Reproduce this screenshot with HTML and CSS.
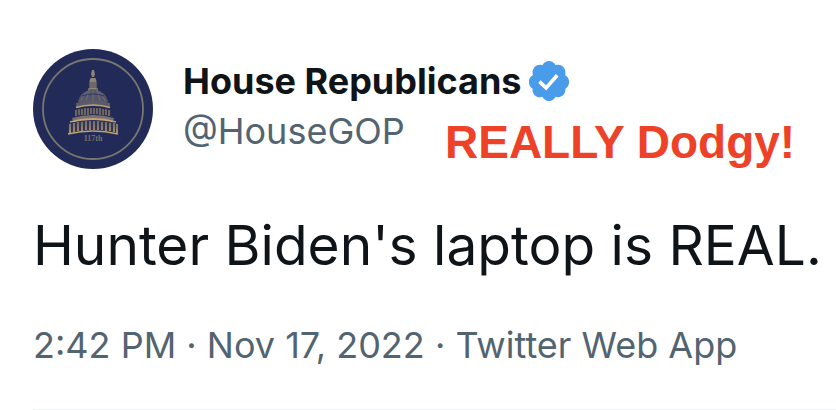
FILE: index.html
```
<!DOCTYPE html>
<html lang="en">
<head>
    <meta charset="UTF-8">
    <meta name="viewport" content="width=device-width, initial-scale=1">
    <title>House Republicans</title>
    <link rel="stylesheet" href="styles.css">
</head>
<body>
    <article class="tweet">
        <header class="tweet-header">
            <svg class="avatar" viewBox="0 0 120 120" role="img" aria-label="Capitol dome">
                <defs>
                    <linearGradient id="gold" x1="0" y1="0" x2="0" y2="1">
                        <stop offset="0" stop-color="#77727a"/>
                        <stop offset="1" stop-color="#b99a68"/>
                    </linearGradient>
                </defs>
                <circle cx="60" cy="60" r="60" fill="#222b57"/>
                <circle cx="60" cy="60" r="50" fill="none" stroke="#77766f" stroke-width="1.8"/>
                <!-- lantern and statue -->
                <path d="M59 28l-1-3 1-4h2l1 4-1 3zM57.5 29h5l1 3v8h-7v-8z" fill="#8d8378"/>
                <path d="M58 33v6M60 33v6M62 33v6" stroke="#34364f" stroke-width=".7"/>
                <path d="M55 40h10" stroke="#9a8b74" stroke-width="1.2"/>
                <!-- dome -->
                <path d="M45 53C46 46 52 41 60 40.500c8 .5 14 5.500 15 12.500z" fill="#555669"/>
                <path d="M48 52q2-7 8-11M53 52q1-7 4-11M60 52V41M67 52q-1-7-4-11M72 52q-2-7-8-11" fill="none" stroke="#77747a" stroke-width=".8"/>
                <path d="M49 47q11-4 22 0" fill="none" stroke="#30375a" stroke-width="1"/>
                <path d="M43 54q17-5 34 0v5q-17-4-34 0z" fill="#5c5b68"/>
                <path d="M43 58.500q17-5 34 0" fill="none" stroke="#c0a273" stroke-width="1.600"/>
                <!-- upper colonnade -->
                <path d="M42 61q18-4 36 0v7q-18-4-36 0z" fill="#313552"/>
                <path d="M43 61v6M46 60v6M49 60v6M52 59v7M55 59v7M58 59v6M61 59v6M64 59v6M67 59v7M70 60v6M73 60v6M76 61v6" stroke="#92866f" stroke-width="1.200"/>
                <path d="M39 69q21-6 42 0l-1 3q-20-5-40 0z" fill="#777074"/>
                <path d="M37 73q23-6 46 0" fill="none" stroke="#c5a471" stroke-width="1.800"/>
                <!-- lower colonnade -->
                <path d="M36 74q24-5 48 0l1 10q-25-6-50 0z" fill="#343753"/>
                <path d="M37 75v9M41 74v9M45 73v9M49 73v9M53 72v9M57 72v9M61 72v9M65 72v9M69 73v8M73 73v9M77 74v8M81 74v9M84 75v9" stroke="url(#gold)" stroke-width="1.700"/>
                <path d="M35 85q25-6 50 0" fill="none" stroke="#bda17a" stroke-width="1.500"/>
                <text class="seal-text" x="60" y="92" text-anchor="middle">117th</text>
            </svg>
            <div class="author">
                <div class="name-row">
                    <span class="name">House Republicans</span>
                    <svg class="badge" viewBox="0 0 24 24" role="img" aria-label="Verified account">
                        <path fill="#489ce9" d="M22.500 12.500c0-1.580-.875-2.950-2.148-3.600.154-.435.238-.905.238-1.400 0-2.210-1.710-3.998-3.818-3.998-.47 0-.92.084-1.336.25C14.818 2.415 13.510 1.500 12 1.500s-2.816.917-3.437 2.250c-.415-.165-.866-.25-1.336-.25-2.110 0-3.818 1.790-3.818 4 0 .494.083.964.237 1.400-1.272.65-2.147 2.018-2.147 3.600 0 1.495.782 2.798 1.942 3.486-.02.170-.032.340-.032.514 0 2.210 1.708 4 3.818 4 .47 0 .92-.086 1.335-.25.620 1.334 1.926 2.250 3.437 2.250 1.512 0 2.818-.916 3.437-2.250.415.163.865.248 1.336.248 2.110 0 3.818-1.790 3.818-4 0-.174-.012-.344-.033-.513 1.158-.687 1.943-1.990 1.943-3.484z"/>
                        <path fill="none" stroke="#fff" stroke-width="1.9" d="M7 12.300l3.500 3.300L16.300 9"/>
                    </svg>
                </div>
                <a class="handle" href="#">@HouseGOP</a>
            </div>
            <strong class="note">REALLY Dodgy!</strong>
        </header>
        <p class="tweet-text">Hunter Biden's laptop is REAL.</p>
        <p class="meta">
            <a href="#"><time datetime="2022-11-17T14:42">2:42 PM · Nov 17, 2022</time></a> · <a href="#">Twitter Web App</a>
        </p>
    </article>
</body>
</html>
```
FILE: styles.css
```
* {
    box-sizing: border-box;
}

body {
    margin: 0;
    background: #fff;
    color: #0f1419;
    font-family: Inter, "Liberation Sans", sans-serif;
}

.tweet {
    padding: 49px 0 0 33px;
}

.tweet-header {
    position: relative;
    display: flex;
    gap: 30px;
}

.avatar {
    width: 120px;
    height: 120px;
    flex-shrink: 0;
}

.seal-text {
    font-family: "Liberation Serif", serif;
    font-size: 8px;
    font-weight: 700;
    fill: #77736f;
}

.author {
    padding-top: 7px;
}

.name-row {
    display: flex;
    align-items: center;
    gap: 5px;
    height: 50px;
}

.name {
    font-size: 36px;
    font-weight: 700;
    white-space: nowrap;
}

.badge {
    width: 46px;
    height: 46px;
}

.handle {
    display: block;
    font-size: 36px;
    line-height: 50px;
    color: #536471;
}

/* red note laid over the header */
.note {
    position: absolute;
    top: 67px;
    left: 412px;
    color: #ee4228;
    font-family: "Liberation Sans", Arial, sans-serif;
    font-size: 46px;
    line-height: 52px;
    white-space: nowrap;
}

.tweet-text {
    margin: 40px 0 0;
    font-size: 55px;
    line-height: 72px;
    white-space: nowrap;
}

.meta {
    margin: 0;
    padding: 40px 0;
    border-bottom: 1px solid #eff3f4;
    font-size: 36px;
    line-height: 48px;
    color: #536471;
    white-space: nowrap;
}

a {
    color: inherit;
    text-decoration: none;
}
```
